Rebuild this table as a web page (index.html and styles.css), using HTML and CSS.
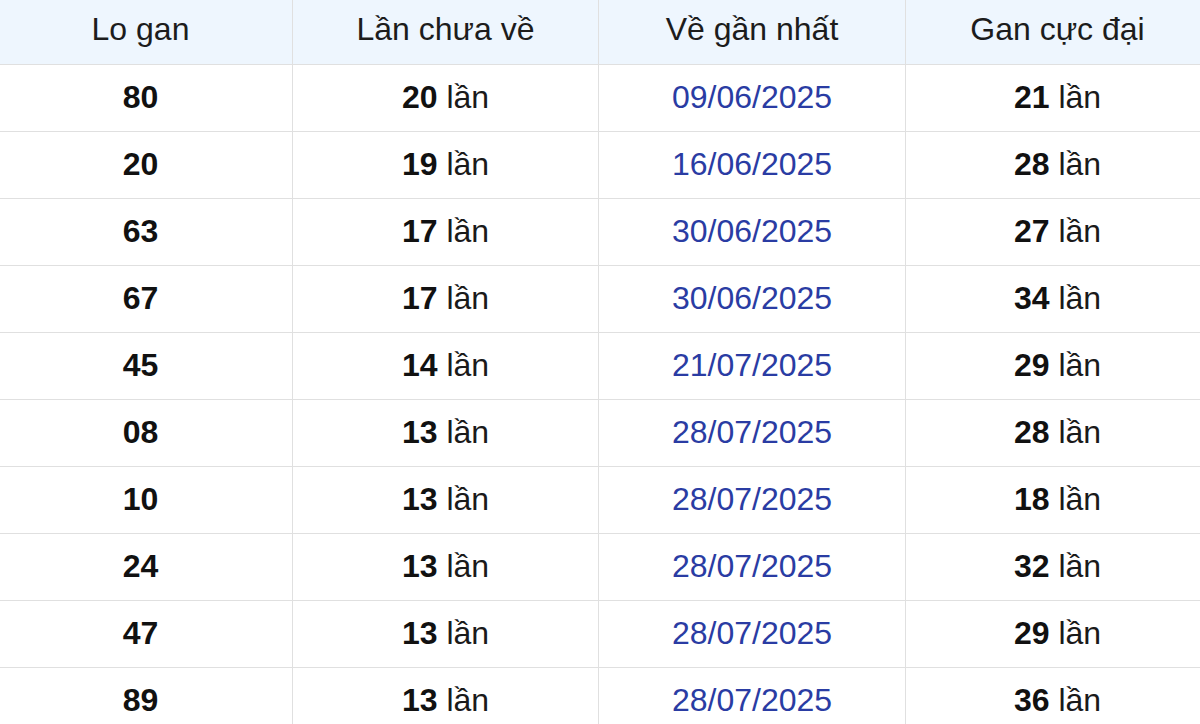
FILE: index.html
```html
<!DOCTYPE html>
<html lang="vi">
<head>
<meta charset="utf-8">
<title>Lo gan</title>
<link rel="stylesheet" href="styles.css">
</head>
<body>
<table class="gan-table">
  <colgroup>
    <col class="c1"><col class="c2"><col class="c3"><col class="c4">
  </colgroup>
  <thead>
    <tr><th>Lo gan</th><th>Lần chưa về</th><th>Về gần nhất</th><th>Gan cực đại</th></tr>
  </thead>
  <tbody>
    <tr><td><b>80</b></td><td><b>20</b> lần</td><td class="date">09/06/2025</td><td><b>21</b> lần</td></tr>
    <tr><td><b>20</b></td><td><b>19</b> lần</td><td class="date">16/06/2025</td><td><b>28</b> lần</td></tr>
    <tr><td><b>63</b></td><td><b>17</b> lần</td><td class="date">30/06/2025</td><td><b>27</b> lần</td></tr>
    <tr><td><b>67</b></td><td><b>17</b> lần</td><td class="date">30/06/2025</td><td><b>34</b> lần</td></tr>
    <tr><td><b>45</b></td><td><b>14</b> lần</td><td class="date">21/07/2025</td><td><b>29</b> lần</td></tr>
    <tr><td><b>08</b></td><td><b>13</b> lần</td><td class="date">28/07/2025</td><td><b>28</b> lần</td></tr>
    <tr><td><b>10</b></td><td><b>13</b> lần</td><td class="date">28/07/2025</td><td><b>18</b> lần</td></tr>
    <tr><td><b>24</b></td><td><b>13</b> lần</td><td class="date">28/07/2025</td><td><b>32</b> lần</td></tr>
    <tr><td><b>47</b></td><td><b>13</b> lần</td><td class="date">28/07/2025</td><td><b>29</b> lần</td></tr>
    <tr><td><b>89</b></td><td><b>13</b> lần</td><td class="date">28/07/2025</td><td><b>36</b> lần</td></tr>
  </tbody>
</table>
</body>
</html>
```
FILE: styles.css
```css
html, body {
  margin: 0;
  padding: 0;
  background: #ffffff;
  overflow: hidden;
}
body {
  font-family: "Liberation Sans", Arial, sans-serif;
  color: #1a1a1a;
}
.gan-table {
  border-collapse: collapse;
  table-layout: fixed;
  width: 1221px;
  margin-left: -12px;
}
.c1 { width: 304px; }
.c2 { width: 306px; }
.c3 { width: 307px; }
.c4 { width: 304px; }
.gan-table th,
.gan-table td {
  border: 1px solid #e0e0e0;
  text-align: center;
  font-size: 32px;
  padding: 0;
}
.gan-table thead tr { height: 64px; }
.gan-table th {
  border-top: none;
  background: #eef6fe;
  font-weight: normal;
  color: #1c1c1c;
  padding-bottom: 4px;
}
.gan-table tbody tr { height: 67px; }
.gan-table td b {
  font-weight: bold;
  color: #111;
}
.gan-table td.date {
  color: #2a3ca3;
}
```
